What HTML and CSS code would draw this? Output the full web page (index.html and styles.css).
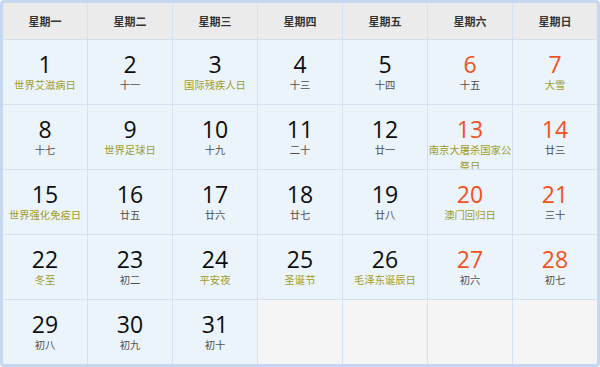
FILE: index.html
```html
<!DOCTYPE html>
<html lang="zh-CN">
<head>
<meta charset="utf-8">
<title>2014年12月日历</title>
<link rel="stylesheet" href="styles.css">
</head>
<body>
<div class="calendar">
  <div class="head">星期一</div>
  <div class="head">星期二</div>
  <div class="head">星期三</div>
  <div class="head">星期四</div>
  <div class="head">星期五</div>
  <div class="head">星期六</div>
  <div class="head">星期日</div>

  <div class="cell"><div class="num">1</div><div class="sub hol">世界艾滋病日</div></div>
  <div class="cell"><div class="num">2</div><div class="sub">十一</div></div>
  <div class="cell"><div class="num">3</div><div class="sub hol">国际残疾人日</div></div>
  <div class="cell"><div class="num">4</div><div class="sub">十三</div></div>
  <div class="cell"><div class="num">5</div><div class="sub">十四</div></div>
  <div class="cell"><div class="num red">6</div><div class="sub">十五</div></div>
  <div class="cell"><div class="num red">7</div><div class="sub hol">大雪</div></div>

  <div class="cell"><div class="num">8</div><div class="sub">十七</div></div>
  <div class="cell"><div class="num">9</div><div class="sub hol">世界足球日</div></div>
  <div class="cell"><div class="num">10</div><div class="sub">十九</div></div>
  <div class="cell"><div class="num">11</div><div class="sub">二十</div></div>
  <div class="cell"><div class="num">12</div><div class="sub">廿一</div></div>
  <div class="cell"><div class="num red">13</div><div class="sub hol">南京大屠杀国家公祭日</div></div>
  <div class="cell"><div class="num red">14</div><div class="sub">廿三</div></div>

  <div class="cell"><div class="num">15</div><div class="sub hol">世界强化免疫日</div></div>
  <div class="cell"><div class="num">16</div><div class="sub">廿五</div></div>
  <div class="cell"><div class="num">17</div><div class="sub">廿六</div></div>
  <div class="cell"><div class="num">18</div><div class="sub">廿七</div></div>
  <div class="cell"><div class="num">19</div><div class="sub">廿八</div></div>
  <div class="cell"><div class="num red">20</div><div class="sub hol">澳门回归日</div></div>
  <div class="cell"><div class="num red">21</div><div class="sub">三十</div></div>

  <div class="cell"><div class="num">22</div><div class="sub hol">冬至</div></div>
  <div class="cell"><div class="num">23</div><div class="sub">初二</div></div>
  <div class="cell"><div class="num">24</div><div class="sub hol">平安夜</div></div>
  <div class="cell"><div class="num">25</div><div class="sub hol">圣诞节</div></div>
  <div class="cell"><div class="num">26</div><div class="sub hol">毛泽东诞辰日</div></div>
  <div class="cell"><div class="num red">27</div><div class="sub">初六</div></div>
  <div class="cell"><div class="num red">28</div><div class="sub">初七</div></div>

  <div class="cell"><div class="num">29</div><div class="sub">初八</div></div>
  <div class="cell"><div class="num">30</div><div class="sub">初九</div></div>
  <div class="cell"><div class="num">31</div><div class="sub">初十</div></div>
  <div class="cell empty"></div>
  <div class="cell empty"></div>
  <div class="cell empty"></div>
  <div class="cell empty"></div>
</div>
</body>
</html>
```

FILE: styles.css
```css
html, body {
  margin: 0;
  padding: 0;
  background: #ffffff;
}

.calendar {
  box-sizing: border-box;
  width: 600px;
  height: 367px;
  border: 3px solid #c5d8ef;
  border-radius: 4px;
  background: #d3e1f1;
  display: grid;
  grid-template-columns: repeat(7, 1fr);
  grid-template-rows: 36px repeat(5, 64px);
  gap: 1px;
  overflow: hidden;
  font-family: "Noto Sans CJK SC", sans-serif;
}

.head {
  background: #ebebeb;
  color: #333333;
  font-size: 11px;
  font-weight: bold;
  display: flex;
  align-items: center;
  justify-content: center;
}

.cell {
  background: #ebf3fb;
  text-align: center;
  overflow: hidden;
  padding-top: 11px;
  box-sizing: border-box;
}

.cell.empty {
  background: #f5f5f5;
}

.num {
  font-family: "Open Sans", "Noto Sans CJK SC", sans-serif;
  font-size: 23px;
  font-weight: 500;
  line-height: 26px;
  color: #0d0d0d;
}

.num.red {
  color: #f2521c;
}

.sub {
  font-size: 10.3px;
  line-height: 16px;
  color: #505050;
}

.sub.hol {
  color: #a09d1e;
}
```
